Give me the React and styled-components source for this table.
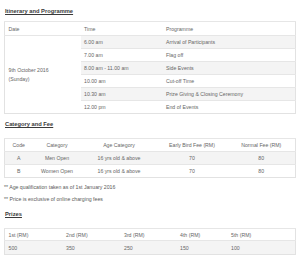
import React from 'react'
import styled, { createGlobalStyle } from 'styled-components'

const GlobalStyle = createGlobalStyle`
  body {
    margin: 0;
    background: #ffffff;
    font-family: "Liberation Sans", Arial, sans-serif;
  }
`

const Page = styled.div`
  width: 300px;
  height: 260px;
  padding: 0 4px;
  box-sizing: border-box;
  overflow: hidden;
  color: #666666;
`

const Heading = styled.h3`
  margin: ${p => p.$top}px 0 ${p => p.$bottom}px 1px;
  height: 8px;
  line-height: 8px;
  font-size: 5.75px;
  font-weight: bold;
  color: #3a3a3a;
  text-decoration: underline;
`

const Table = styled.table`
  width: 292px;
  table-layout: fixed;
  border-collapse: collapse;
  border: 1px solid #e2e2e2;
  font-size: 5.2px;
`

const Row = styled.tr`
  height: ${p => p.$h}px;
  background: ${p => (p.$striped ? '#f4f4f4' : '#ffffff')};
`

const Cell = styled.td`
  padding: 0 0 0 ${p => (p.$center ? 0 : 3.5)}px;
  border-top: 1px solid #e6e6e6;
  text-align: ${p => (p.$center ? 'center' : 'left')};
  vertical-align: middle;
  line-height: 6px;
  white-space: nowrap;
`

const DateCell = styled(Cell)`
  background: #ffffff;
  line-height: 9px;
`

const Notes = styled.div`
  margin-top: 3px;
  font-size: 5.2px;
  line-height: 12px;
  color: #5a5a5a;
`

const schedule = [
  ['6.00 am', 'Arrival of Participants'],
  ['7.00 am', 'Flag off'],
  ['8.00 am - 11.00 am', 'Side Events'],
  ['10.00 am', 'Cut-off Time'],
  ['10.30 am', 'Prize Giving & Closing Ceremony'],
  ['12.00 pm', 'End of Events'],
]

const fees = [
  ['A', 'Men Open', '16 yrs old & above', '70', '80'],
  ['B', 'Women Open', '16 yrs old & above', '70', '80'],
]

const prizes = ['500', '350', '250', '150', '100']

const App = () => (
  <Page>
    <GlobalStyle />

    <Heading $top={7} $bottom={6}>Itinerary and Programme</Heading>
    <Table>
      <colgroup>
        <col style={{ width: 76 }} />
        <col style={{ width: 82 }} />
        <col />
      </colgroup>
      <tbody>
        <Row $h={14}>
          <Cell>Date</Cell>
          <Cell>Time</Cell>
          <Cell>Programme</Cell>
        </Row>
        {schedule.map(([time, item], i) => (
          <Row key={time} $h={13} $striped={i % 2 === 0}>
            {i === 0 && (
              <DateCell rowSpan={schedule.length}>
                9th October 2016
                <br />
                (Sunday)
              </DateCell>
            )}
            <Cell>{time}</Cell>
            <Cell>{item}</Cell>
          </Row>
        ))}
      </tbody>
    </Table>

    <Heading $top={6} $bottom={10}>Category and Fee</Heading>
    <Table>
      <colgroup>
        <col style={{ width: 28 }} />
        <col style={{ width: 49 }} />
        <col style={{ width: 75 }} />
        <col style={{ width: 71 }} />
        <col />
      </colgroup>
      <tbody>
        <Row $h={13}>
          <Cell $center>Code</Cell>
          <Cell $center>Category</Cell>
          <Cell $center>Age Category</Cell>
          <Cell $center>Early Bird Fee (RM)</Cell>
          <Cell $center>Normal Fee (RM)</Cell>
        </Row>
        {fees.map((f, i) => (
          <Row key={f[0]} $h={13} $striped={i % 2 === 0}>
            {f.map((v, j) => (
              <Cell key={j} $center>{v}</Cell>
            ))}
          </Row>
        ))}
      </tbody>
    </Table>

    <Notes>
      <div>** Age qualification taken as of 1st January 2016</div>
      <div>** Price is exclusive of online charging fees</div>
    </Notes>

    <Heading $top={5} $bottom={10}>Prizes</Heading>
    <Table>
      <colgroup>
        <col style={{ width: 58 }} />
        <col style={{ width: 58 }} />
        <col style={{ width: 56 }} />
        <col style={{ width: 51 }} />
        <col />
      </colgroup>
      <tbody>
        <Row $h={12}>
          {['1st', '2nd', '3rd', '4th', '5th'].map(p => (
            <Cell key={p}>{p} (RM)</Cell>
          ))}
        </Row>
        <Row $h={14} $striped>
          {prizes.map((v, i) => (
            <Cell key={i}>{v}</Cell>
          ))}
        </Row>
      </tbody>
    </Table>
  </Page>
)

export default App
